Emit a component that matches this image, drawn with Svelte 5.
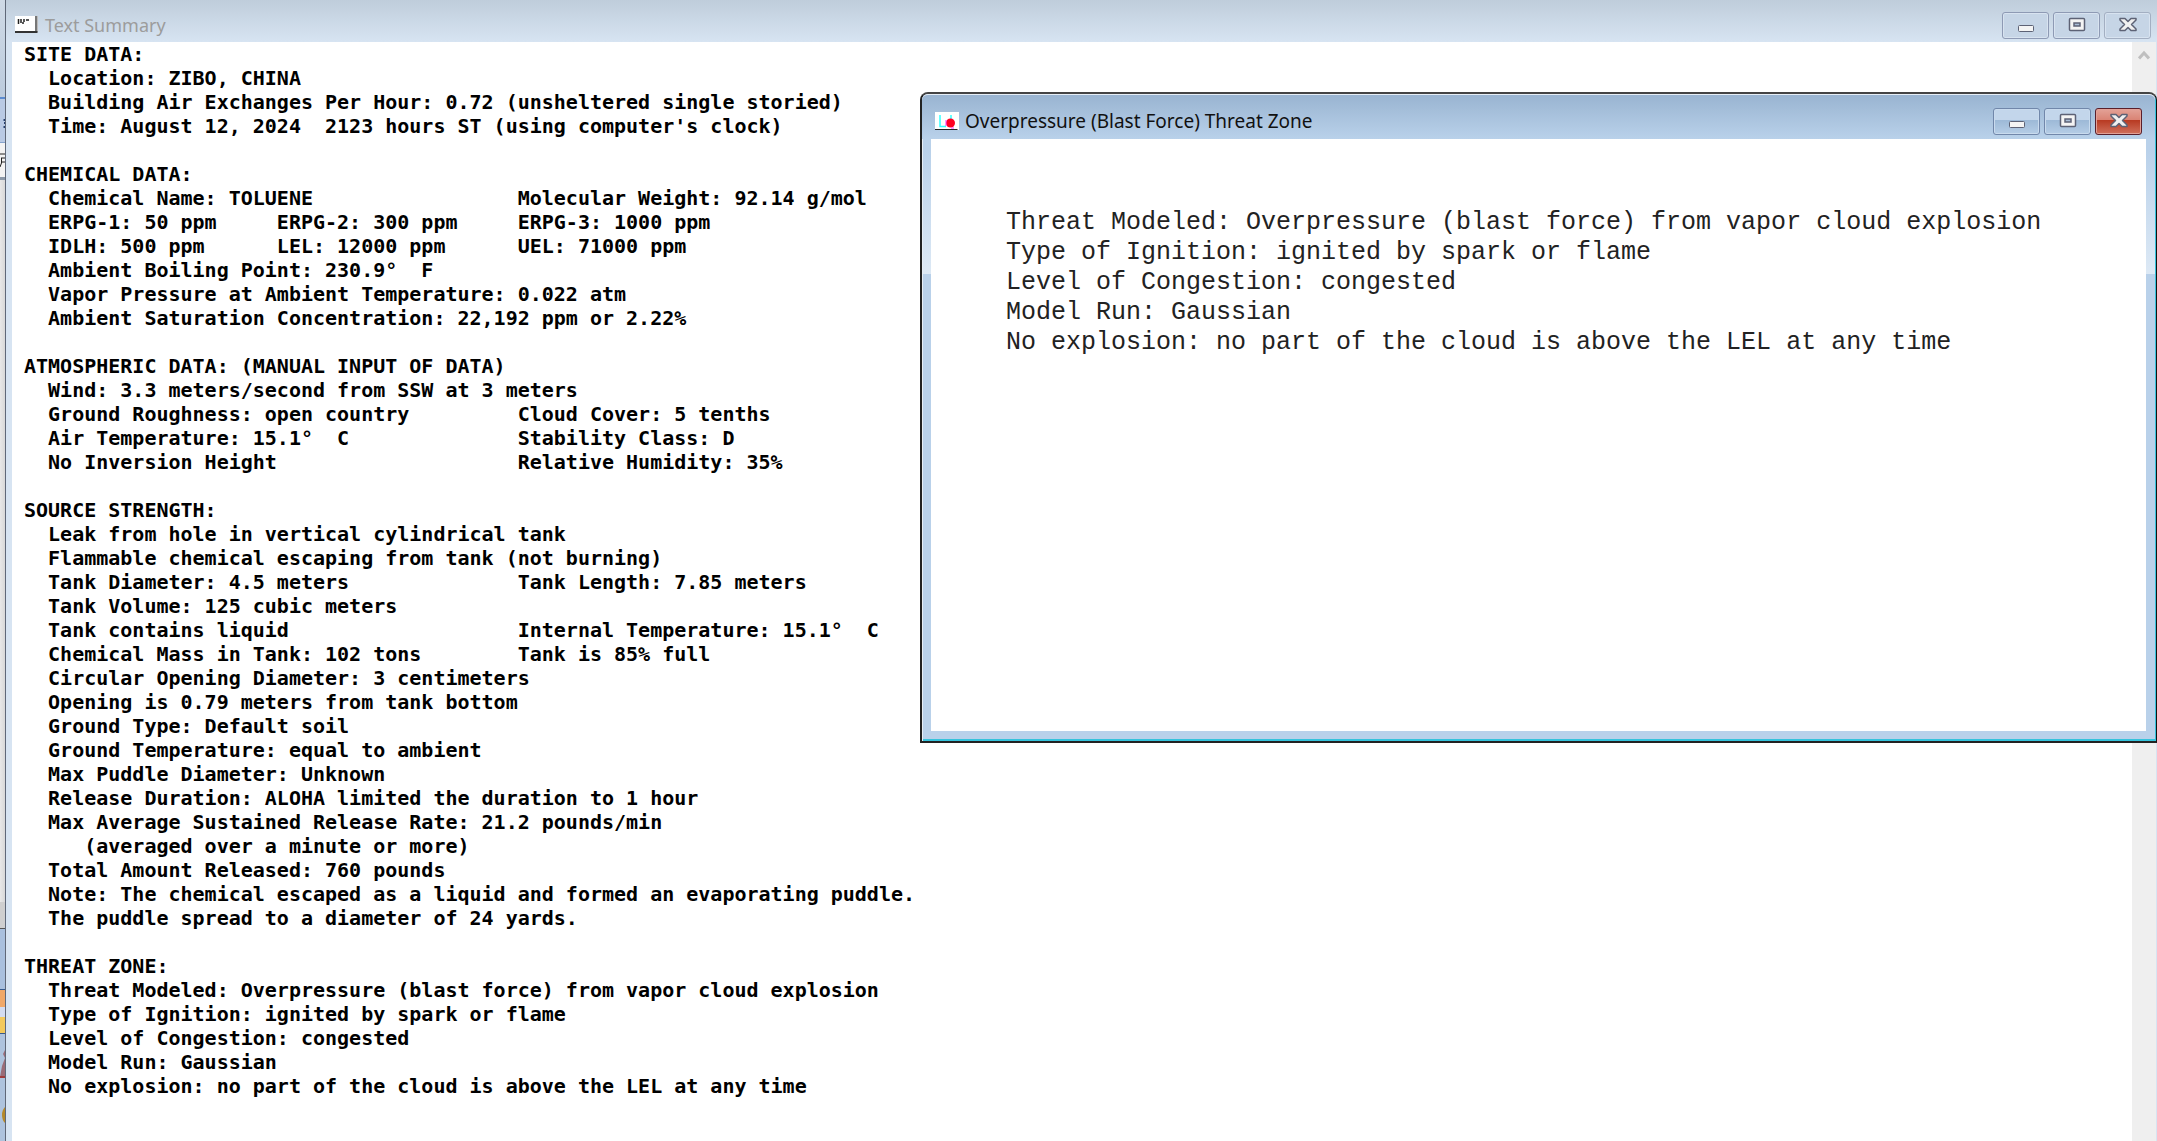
<script lang="ts">
    // fixed-pitch report, two-column rows are padded out with spaces
    const sections = [
        {
            title: "SITE DATA:",
            body: `  Location: ZIBO, CHINA
  Building Air Exchanges Per Hour: 0.72 (unsheltered single storied)
  Time: August 12, 2024  2123 hours ST (using computer's clock)`,
        },
        {
            title: "CHEMICAL DATA:",
            body: `  Chemical Name: TOLUENE                 Molecular Weight: 92.14 g/mol
  ERPG-1: 50 ppm     ERPG-2: 300 ppm     ERPG-3: 1000 ppm
  IDLH: 500 ppm      LEL: 12000 ppm      UEL: 71000 ppm
  Ambient Boiling Point: 230.9°  F
  Vapor Pressure at Ambient Temperature: 0.022 atm
  Ambient Saturation Concentration: 22,192 ppm or 2.22%`,
        },
        {
            title: "ATMOSPHERIC DATA: (MANUAL INPUT OF DATA)",
            body: `  Wind: 3.3 meters/second from SSW at 3 meters
  Ground Roughness: open country         Cloud Cover: 5 tenths
  Air Temperature: 15.1°  C              Stability Class: D
  No Inversion Height                    Relative Humidity: 35%`,
        },
        {
            title: "SOURCE STRENGTH:",
            body: `  Leak from hole in vertical cylindrical tank
  Flammable chemical escaping from tank (not burning)
  Tank Diameter: 4.5 meters              Tank Length: 7.85 meters
  Tank Volume: 125 cubic meters
  Tank contains liquid                   Internal Temperature: 15.1°  C
  Chemical Mass in Tank: 102 tons        Tank is 85% full
  Circular Opening Diameter: 3 centimeters
  Opening is 0.79 meters from tank bottom
  Ground Type: Default soil
  Ground Temperature: equal to ambient
  Max Puddle Diameter: Unknown
  Release Duration: ALOHA limited the duration to 1 hour
  Max Average Sustained Release Rate: 21.2 pounds/min
     (averaged over a minute or more)
  Total Amount Released: 760 pounds
  Note: The chemical escaped as a liquid and formed an evaporating puddle.
  The puddle spread to a diameter of 24 yards.`,
        },
        {
            title: "THREAT ZONE:",
            body: `  Threat Modeled: Overpressure (blast force) from vapor cloud explosion
  Type of Ignition: ignited by spark or flame
  Level of Congestion: congested
  Model Run: Gaussian
  No explosion: no part of the cloud is above the LEL at any time`,
        },
    ];

    const threat = [
        "Threat Modeled: Overpressure (blast force) from vapor cloud explosion",
        "Type of Ignition: ignited by spark or flame",
        "Level of Congestion: congested",
        "Model Run: Gaussian",
        "No explosion: no part of the cloud is above the LEL at any time",
    ];
</script>

{#snippet controls()}
    <div class="controls">
        <button type="button" aria-label="Minimize">
            <svg width="18" height="16" viewBox="0 0 18 16">
                <rect x="1.5" y="8.5" width="15" height="6" rx="1" fill="#f4f4f4" stroke="#5d6275" />
            </svg>
        </button>
        <button type="button" aria-label="Maximize">
            <svg width="18" height="16" viewBox="0 0 18 16">
                <rect x="1.5" y="1.5" width="15" height="12" rx="1" fill="#f4f4f4" stroke="#5d6275" stroke-width="1.5" />
                <rect x="6" y="6" width="6" height="3" fill="#a9bdd6" stroke="#5d6275" stroke-width="1.5" />
            </svg>
        </button>
        <button type="button" class="close" aria-label="Close">
            <svg width="18" height="16" viewBox="0 0 18 16">
                <path d="M1 1.5H6L9 4.5L12 1.5H17V3L12.500 7.500L17 12V13.5H12L9 10.5L6 13.5H1V12L5.500 7.500L1 3Z" fill="#f0f0f0" stroke="#5d6275" stroke-width="1.500" stroke-linejoin="round" />
            </svg>
        </button>
    </div>
{/snippet}

<div class="desktop">
    <div class="behind">
        <i class="caption"></i>
        <i class="menu">
            <svg width="5" height="12" viewBox="0 0 5 12">
                <path d="M3.500 2H5M4 5h1M3.500 9H5" stroke="#26406e" stroke-width="2" />
            </svg>
        </i>
        <i class="tool">
            <svg width="5" height="20" viewBox="0 0 5 20">
                <path d="M0 3H5M1 7H5M1.500 7V12L0 16M1.500 11H5" fill="none" stroke="#222" />
            </svg>
        </i>
        <i class="canvas"></i>
        <i class="status"></i>
        <i class="taskbar"></i>
        <i class="orange"></i>
        <i class="gap"></i>
        <i class="yellow"></i>
        <i class="rest">
            <svg width="5" height="107" viewBox="0 0 5 107">
                <path d="M5 16L3 20L5 24L2 32L0 43H5Z" fill="#9a6c78" />
                <path d="M0 43H5" stroke="#a03c3c" stroke-width="2" />
                <path d="M5 73Q2 76 2 81Q2 86 5 89Z" fill="#b5892a" />
            </svg>
        </i>
    </div>

    <section class="summary">
        <header>
            <svg width="24" height="18" viewBox="0 0 24 18">
                <path d="M0 0H23V16H0Z" fill="#fff" />
                <path d="M20 0H22.500V16H20Z" fill="#777" />
                <path d="M0 15H22.500V17H0Z" fill="#333" />
                <path d="M3.500 3v5M6 3v4M7 7h2M9 3v3M11 4h3" stroke="#222" stroke-width="1.500" />
            </svg>
            <h1>Text Summary</h1>
            {@render controls()}
        </header>
        <div class="client">
            <article>
                {#each sections as section}
                    <h2>{section.title}</h2>
                    <pre>{section.body}</pre>
                {/each}
            </article>
            <div class="scrollbar">
                <svg width="12" height="10" viewBox="0 0 12 10">
                    <path d="M1 8.500L6 3L11 8.500" fill="none" stroke="#bfbfbf" stroke-width="3" />
                </svg>
            </div>
        </div>
    </section>

    <section class="threat">
        <header>
            <svg width="24" height="18" viewBox="0 0 24 18">
                <path d="M0 0H24V18H0Z" fill="#fff" />
                <path d="M5 3V14.500H11M16 3v5" fill="none" stroke="#3ff" stroke-width="1.500" />
                <circle cx="15.500" cy="11" r="4.500" fill="#f02" />
                <path d="M11 8v6M16 16h3" stroke="#f3f" />
                <path d="M0 17.500H22.500" stroke="#222" />
            </svg>
            <h1>Overpressure (Blast Force) Threat Zone</h1>
            {@render controls()}
        </header>
        <div class="message">
            {#each threat as line}
                <p>{line}</p>
            {/each}
        </div>
    </section>
</div>

<style>
    :global(body) {
        margin: 0;
        background: #fff;
    }

    h1, h2, p, pre {
        margin: 0;
        font-weight: normal;
    }

    .desktop {
        position: relative;
        display: flex;
        min-height: 100vh;
        overflow: hidden;
    }

    /* sliver of the application behind the windows */
    .behind {
        width: 5px;
        display: flex;
        flex-direction: column;
    }
    .behind i {
        box-sizing: border-box;
        overflow: hidden;
    }
    .behind svg {
        display: block;
    }
    .caption { height: 97px; background: linear-gradient(#cfdae6, #bccbdd); }
    .menu { height: 46px; padding-top: 19px; background: #b9cae4; border-top: 2px solid #5b8bd0; border-bottom: 1px solid #86a3cc; }
    .tool { height: 37px; padding-top: 8px; background: #f3f3f3; border-bottom: 3px solid #8b98a8; }
    .canvas { height: 722px; background: linear-gradient(90deg, #e8e8e8, #d8d8d8); }
    .status { height: 27px; background: #cfcfcf; border-bottom: 1px solid #555; }
    .taskbar { height: 61px; background: #a9c0de; border-bottom: 1px solid #375a8c; }
    .orange { height: 17px; background: #f0a868; }
    .gap { height: 10px; background: #d3dcf0; }
    .yellow { height: 17px; background: #f3c95c; border-bottom: 1px solid #375a8c; }
    .rest { flex: 1; background: #aec3dd; }

    header {
        display: flex;
        align-items: center;
        box-sizing: border-box;
        gap: 6px;
    }
    h1 {
        flex: 1;
        font: 18px/24px "Noto Sans", "Open Sans", sans-serif;
    }

    .summary {
        flex: 1;
        display: flex;
        flex-direction: column;
        border-left: 1px solid #5f6878;
        background: #d7e4f2;
    }
    .summary header {
        height: 42px;
        padding: 8px 6px 0 9px;
        background: linear-gradient(#bfcddb, #d7e4f2);
    }
    .summary h1 {
        color: #9c9c9c;
    }

    .client {
        flex: 1;
        display: flex;
        margin: 0 1px 0 6px;
        background: #fff;
    }
    article {
        flex: 1;
        padding: 0 12px;
    }
    h2, pre {
        font: bold 20px/24px "DejaVu Sans Mono", "Liberation Mono", monospace;
        color: #000;
    }
    pre {
        padding-bottom: 24px;
    }
    .scrollbar {
        width: 24px;
        padding-top: 4px;
        background: #efefef;
        text-align: center;
    }

    .controls {
        display: flex;
        gap: 4px;
    }
    button {
        width: 47px;
        height: 27px;
        padding: 0;
        display: flex;
        align-items: center;
        justify-content: center;
        border: 1px solid #8e9ab4;
        border-radius: 3px;
        background: #c6d5e6;
        box-shadow: inset 0 0 0 1px #d8e3f0;
    }
    .summary .close {
        border-color: #a3afc2;
    }

    /* active window floats over the report */
    .threat {
        position: absolute;
        top: 92px;
        left: 920px;
        right: 0;
        height: 651px;
        box-sizing: border-box;
        display: flex;
        flex-direction: column;
        padding: 0 10px 10px 9px;
        border: 2px solid #222;
        border-right: 1px solid #111;
        border-top-color: #444;
        border-radius: 8px 8px 0 0;
        background: linear-gradient(#b9d1ea 56px, #dde9f5 180px, #b9d1ea 180px);
        box-shadow: inset 1px 1px 0 #e6eef6, inset -1px -2px 0 #35c3dc;
    }
    .threat header {
        height: 45px;
        margin: 0 -9px;
        padding: 8px 13px 0;
        border-top: 1px solid #e6eef6;
        border-radius: 6px 6px 0 0;
        background: linear-gradient(#99b4d1, #b9d1ea);
    }
    .threat h1 {
        font-size: 19px;
        color: #111;
    }
    .threat button {
        border-color: #7187aa;
        background: linear-gradient(#c3d6eb 45%, #9db9d7 45%, #b5cde6);
        box-shadow: inset 0 0 0 1px #c9dbee;
    }
    .threat .close {
        border-color: #5a1f2b;
        background: linear-gradient(#e3a297, #d98273 45%, #b83a22 45%, #d0705c);
        box-shadow: inset 0 0 0 1px #e2a096;
    }

    .message {
        flex: 1;
        padding: 69px 75px;
        background: #fff;
        color: #222;
    }
    p {
        font: 25px/30px "Liberation Mono", "Courier New", monospace;
    }
</style>
